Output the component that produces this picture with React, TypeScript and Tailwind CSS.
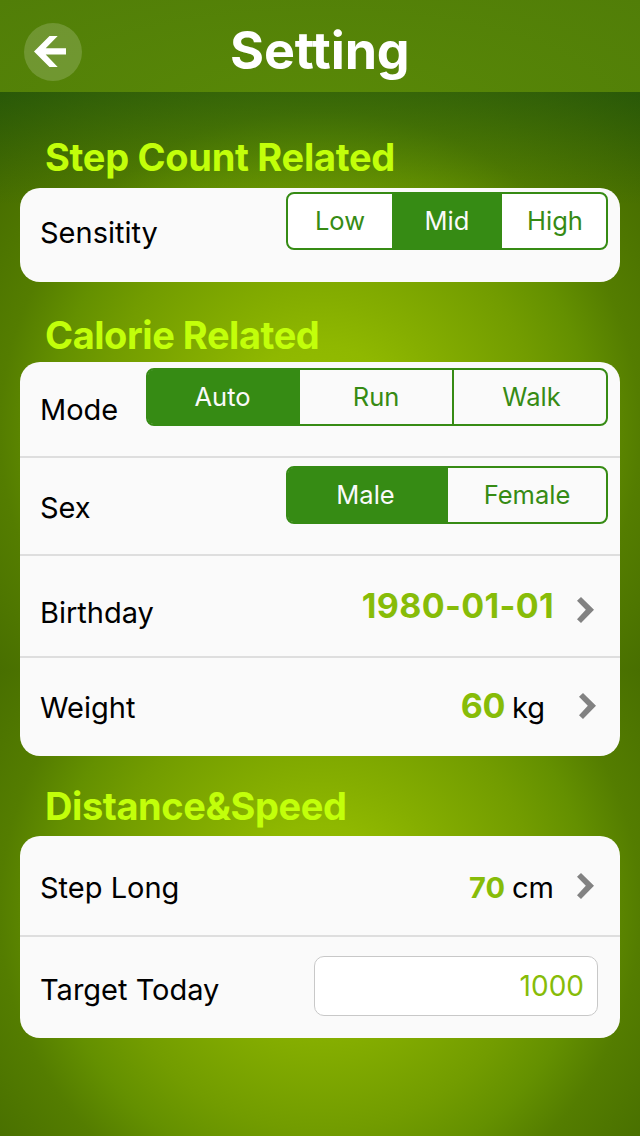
import React, { useState } from 'react';

interface SegmentedProps {
  options: { label: string; className: string }[];
  initial: string;
  className: string;
}

const Segmented = ({ options, initial, className }: SegmentedProps) => {
  const [active, setActive] = useState(initial);

  return (
    <div className={`flex h-[58px] rounded-lg border-2 border-[#368b14] ${className}`}>
      {options.map((o) => (
        <button
          key={o.label}
          onClick={() => setActive(o.label)}
          className={`h-full text-[25.5px] leading-[54px] first:rounded-l-[5px] last:rounded-r-[5px] ${o.className} ${active === o.label ? 'bg-[#368b14] text-[#fafafa]' : 'text-[#368b14]'}`}
        >
          {o.label}
        </button>
      ))}
    </div>
  );
};

const Chevron = ({ className }: { className: string }) => (
  <svg viewBox="0 0 17 26" className={`h-[26px] w-[17px] shrink-0 ${className}`}>
    <path d="M4 0 17 12.8 4 26 0 22.2 8.8 12.8 0 3.8Z" fill="#828282" />
  </svg>
);

const Label = ({ children }: { children: React.ReactNode }) => (
  <span className="pl-5 text-[29px] leading-[36px] text-black">{children}</span>
);

const Heading = ({ children, className }: { children: React.ReactNode; className: string }) => (
  <h2 className={`pl-[45px] text-[38px] font-bold leading-[46px] text-[#c2ff0a] ${className}`}>{children}</h2>
);

const Card = ({ children }: { children: React.ReactNode }) => (
  <section className="mx-5 overflow-hidden rounded-[20px] bg-[#fafafa]">{children}</section>
);

// two round glows stacked vertically, with a dark green fade under the header
const BACKDROP =
  'bg-[linear-gradient(180deg,#0f4a1466_92px,#0f4a1433_145px,#0f4a1400_205px),radial-gradient(circle_at_320px_430px,#97c000_0px,#8fb800_85px,#85ae00_130px,#729c00_220px,#649000_270px,#547d00_320px,#486f00_400px,#3a6200_470px),radial-gradient(circle_at_320px_240px,#97c000_0px,#8fb800_85px,#85ae00_130px,#729c00_220px,#649000_270px,#547d00_320px,#486f00_400px)] bg-[length:640px_1136px,640px_670px,640px_466px] bg-[position:0_0,0_0,0_670px] bg-no-repeat';

export default function App() {
  return (
    <main className={`h-[1136px] w-[640px] overflow-hidden font-['Inter',sans-serif] ${BACKDROP}`}>
      <header className="flex h-[92px] items-start bg-[radial-gradient(ellipse_at_50%_120%,#598907,#517e08)] pl-6">
        <button className="mt-[23px] h-[58px] w-[58px] rounded-full bg-white/17">
          <svg viewBox="0 0 58 58" className="h-[58px] w-[58px]">
            <path d="M10 28.5 25.5 13h8.2L21.7 25.2H42v6.3H21.7L33.7 44h-8.2Z" fill="#fff" />
          </svg>
        </button>
        <h1 className="ml-[148px] mt-[19px] text-[52px] font-bold leading-[64px] tracking-[-0.15px] text-white">Setting</h1>
      </header>

      <Heading className="mt-[42px] mb-2 tracking-[-0.3px]">Step Count Related</Heading>
      <Card>
        <div className="flex h-[94px] justify-between pt-1 pr-3">
          <div className="pt-[23px]"><Label>Sensitity</Label></div>
          <Segmented
            initial="Mid"
            className="w-[322px] bg-white"
            options={[
              { label: 'Low', className: 'w-[104px]' },
              { label: 'Mid', className: 'w-[110px]' },
              { label: 'High', className: 'w-[104px] pl-0.5' },
            ]}
          />
        </div>
      </Card>

      <Heading className="mt-[30px] mb-1 tracking-[-0.45px]">Calorie Related</Heading>
      <Card>
        <div className="flex h-24 justify-between border-b-2 border-[#dedede] pt-1.5 pr-3">
          <div className="pt-6"><Label>Mode</Label></div>
          <Segmented
            initial="Auto"
            className="w-[462px]"
            options={[
              { label: 'Auto', className: 'w-[152px] pr-[3px]' },
              { label: 'Run', className: 'w-[154px] border-r-2 border-[#368b14]' },
              { label: 'Walk', className: 'w-[152px] pl-[3px]' },
            ]}
          />
        </div>
        <div className="flex h-[98px] justify-between border-b-2 border-[#dedede] pt-2 pr-3">
          <div className="pt-6"><Label>Sex</Label></div>
          <Segmented
            initial="Male"
            className="w-[322px]"
            options={[
              { label: 'Male', className: 'w-[160px] pr-[5px]' },
              { label: 'Female', className: 'w-[158px]' },
            ]}
          />
        </div>
        <div className="flex h-[102px] justify-between border-b-2 border-[#dedede] pr-[26px]">
          <div className="pt-[39px]"><Label>Birthday</Label></div>
          <div className="flex">
            <span className="pt-[29px] text-[34px] font-bold leading-[42px] tracking-[0.35px] text-[#87bc08]">1980-01-01</span>
            <Chevron className="ml-[23px] mt-[41px]" />
          </div>
        </div>
        <div className="flex h-[98px] justify-between pr-6">
          <div className="pt-8"><Label>Weight</Label></div>
          <div className="flex">
            <span className="pt-[27px] text-[34px] font-bold leading-[42px] tracking-[-0.4px] text-[#87bc08]">60</span>
            <span className="ml-[7px] pt-8 text-[29px] leading-[36px]">kg</span>
            <Chevron className="ml-[34px] mt-[35px]" />
          </div>
        </div>
      </Card>

      <Heading className="mt-[27px] mb-[7px] tracking-[-0.43px]">Distance&amp;Speed</Heading>
      <Card>
        <div className="flex h-[101px] justify-between border-b-2 border-[#dedede] pr-[26px]">
          <div className="pt-[34px]"><Label>Step Long</Label></div>
          <div className="flex">
            <span className="pt-[33px] text-[29px] font-bold leading-[37px] text-[#87bc08]">70</span>
            <span className="ml-[7px] pt-[34px] text-[29px] leading-[36px]">cm</span>
            <Chevron className="ml-[23px] mt-[37px]" />
          </div>
        </div>
        <div className="flex h-[101px] justify-between pr-[22px]">
          <div className="pt-[35px]"><Label>Target Today</Label></div>
          <div className="mt-[19px] h-[60px] w-[284px] rounded-[10px] border border-[#c8c8c8] bg-white pr-[13px] text-right text-[28px] leading-[58px] text-[#87bc08]">1000</div>
        </div>
      </Card>
    </main>
  );
}
